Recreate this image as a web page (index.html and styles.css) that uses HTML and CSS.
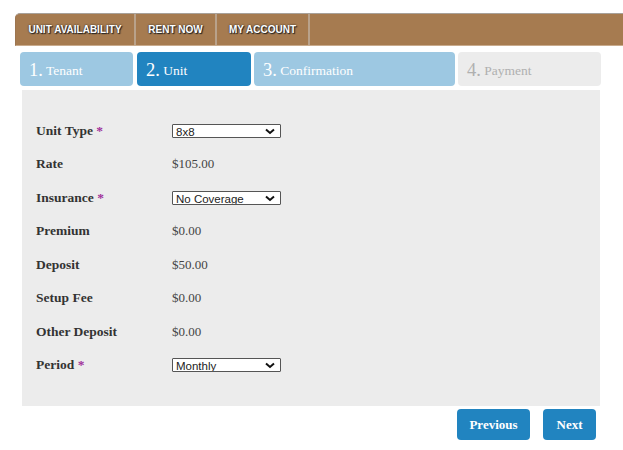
FILE: index.html
```html
<!DOCTYPE html>
<html lang="en">
<head>
    <meta charset="UTF-8">
    <meta name="viewport" content="width=device-width, initial-scale=1.0">
    <title>Rent Now - Unit</title>
    <link rel="stylesheet" href="styles.css">
</head>
<body>
    <div class="nav">
        <a href="#" class="nav-item nav-1">Unit Availability</a>
        <a href="#" class="nav-item nav-2">Rent Now</a>
        <a href="#" class="nav-item nav-3">My Account</a>
        <span class="nav-item nav-fill"></span>
    </div>

    <div class="steps">
        <div class="step step-done step-1"><span class="num">1.</span> Tenant</div>
        <div class="step step-active step-2"><span class="num">2.</span> Unit</div>
        <div class="step step-done step-3"><span class="num">3.</span> Confirmation</div>
        <div class="step step-todo step-4"><span class="num">4.</span> Payment</div>
    </div>

    <div class="panel">
        <div class="row">
            <label for="unitType">Unit Type <span class="req">*</span></label>
            <span class="select-wrap">
                <select id="unitType">
                    <option>8x8</option>
                    <option>10x10</option>
                    <option>10x15</option>
                </select>
                <svg class="chevron" width="10" height="7" viewBox="0 0 10 7"><path d="M1 1.5 L5 5 L9 1.5" fill="none" stroke="#111" stroke-width="2"/></svg>
            </span>
        </div>
        <div class="row">
            <label>Rate</label>
            <span class="value">$105.00</span>
        </div>
        <div class="row">
            <label for="insurance">Insurance <span class="req">*</span></label>
            <span class="select-wrap">
                <select id="insurance">
                    <option>No Coverage</option>
                    <option>$2,000</option>
                    <option>$5,000</option>
                </select>
                <svg class="chevron" width="10" height="7" viewBox="0 0 10 7"><path d="M1 1.5 L5 5 L9 1.5" fill="none" stroke="#111" stroke-width="2"/></svg>
            </span>
        </div>
        <div class="row">
            <label>Premium</label>
            <span class="value">$0.00</span>
        </div>
        <div class="row">
            <label>Deposit</label>
            <span class="value">$50.00</span>
        </div>
        <div class="row">
            <label>Setup Fee</label>
            <span class="value">$0.00</span>
        </div>
        <div class="row">
            <label>Other Deposit</label>
            <span class="value">$0.00</span>
        </div>
        <div class="row">
            <label for="period">Period <span class="req">*</span></label>
            <span class="select-wrap">
                <select id="period">
                    <option>Monthly</option>
                    <option>Quarterly</option>
                    <option>Yearly</option>
                </select>
                <svg class="chevron" width="10" height="7" viewBox="0 0 10 7"><path d="M1 1.5 L5 5 L9 1.5" fill="none" stroke="#111" stroke-width="2"/></svg>
            </span>
        </div>
    </div>

    <div class="actions">
        <button class="btn btn-prev">Previous</button>
        <button class="btn btn-next">Next</button>
    </div>
</body>
</html>
```

FILE: styles.css
```css
:root {
    --brown: #a67b50;
    --blue: #2184c0;
    --light-blue: #9dc8e2;
    --panel: #ececec;
    --text: #333333;
}

* {
    box-sizing: border-box;
}

body {
    margin: 0;
    background: #ffffff;
    font-family: "Liberation Serif", "Times New Roman", serif;
    color: var(--text);
    overflow: hidden;
}

/* top menu */
.nav {
    display: flex;
    height: 33px;
    margin: 13px 0 0 15px;
    background-color: var(--brown);
    border-top: 1px solid #a8a19a;
    border-bottom: 1px solid #c9ab8d;
    border-left: 1px solid #9c7550;
    border-radius: 5px 0 0 0;
}

.nav-item {
    display: flex;
    align-items: center;
    justify-content: center;
    padding-bottom: 1px;
    border-right: 2px solid #b9a28b;
    color: #ffffff;
    font-family: "Liberation Sans", Arial, sans-serif;
    font-size: 10px;
    font-weight: bold;
    text-transform: uppercase;
    text-decoration: none;
    text-shadow: 0 0 2px #222, 1px 1px 1px #222;
}

.nav-1 { width: 120px; }
.nav-2 { width: 81px; }
.nav-3 { width: 93px; }

.nav-fill {
    flex: 1;
    border-right: none;
}

/* wizard steps */
.steps {
    display: flex;
    margin: 6px 0 0 20px;
}

.step {
    height: 34px;
    display: flex;
    align-items: center;
    padding: 3px 0 0 9px;
    border-radius: 4px;
    font-size: 13.5px;
    color: #ffffff;
    white-space: pre;
}

.step .num {
    font-size: 18.5px;
}

.step-1 { width: 113px; margin-right: 4px; }
.step-2 { width: 114px; margin-right: 3px; }
.step-3 { width: 201px; margin-right: 3px; }
.step-4 { width: 143px; }

.step-done {
    background-color: var(--light-blue);
}

.step-active {
    background-color: var(--blue);
}

.step-todo {
    background-color: var(--panel);
    color: #b0b0b0;
}

/* form panel */
.panel {
    width: 578px;
    margin: 4px 0 0 22px;
    padding: 24px 0 24px 14px;
    background-color: var(--panel);
}

.row {
    display: grid;
    grid-template-columns: 136px 109px;
    align-items: center;
    height: 33.5px;
}

.row label {
    font-size: 13.5px;
    font-weight: bold;
    color: var(--text);
}

.req {
    color: #a0309a;
}

.value {
    font-size: 13px;
    color: #444444;
}

.select-wrap {
    position: relative;
    display: block;
    width: 109px;
    height: 14px;
}

.select-wrap select {
    display: block;
    width: 109px;
    height: 14px;
    margin: 0;
    padding: 1px 0 0 3px;
    appearance: none;
    -webkit-appearance: none;
    font-family: "Liberation Sans", Arial, sans-serif;
    font-size: 11.5px;
    line-height: 12px;
    color: #222222;
    background-color: #ffffff;
    border: 1px solid #555555;
    border-radius: 1px;
    outline: none;
}

.chevron {
    position: absolute;
    right: 6px;
    top: 4px;
    pointer-events: none;
}

/* buttons */
.actions {
    display: flex;
    justify-content: flex-end;
    gap: 13px;
    width: 596px;
    margin-top: 3px;
}

.btn {
    height: 31px;
    padding: 0;
    border: none;
    border-radius: 4px;
    background-color: var(--blue);
    color: #ffffff;
    font-family: "Liberation Serif", "Times New Roman", serif;
    font-size: 13px;
    font-weight: bold;
    cursor: pointer;
}

.btn-prev { width: 73px; }
.btn-next { width: 53px; }

.btn:hover {
    opacity: 0.9;
}
```
